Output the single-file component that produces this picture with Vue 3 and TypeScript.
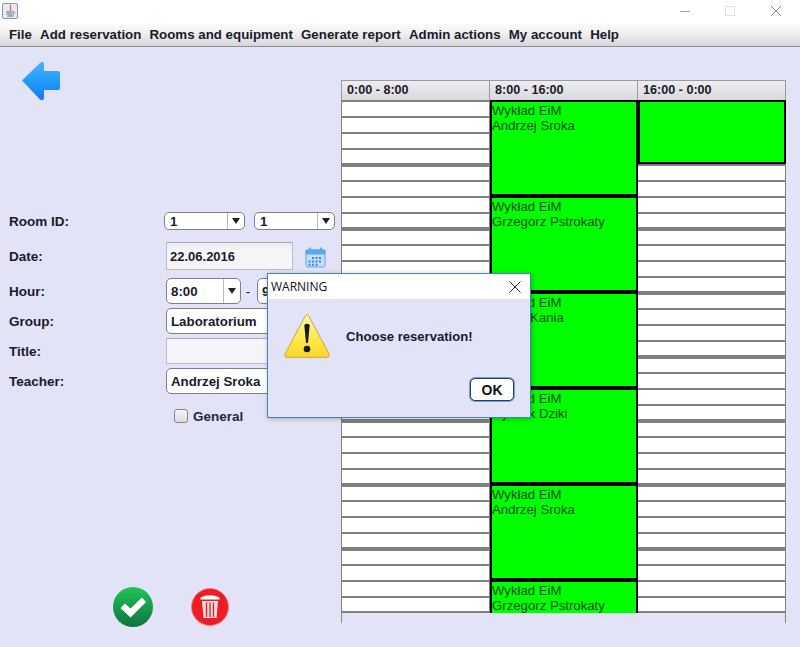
<script setup lang="ts">
const menus: string[] = ['File', 'Add reservation', 'Rooms and equipment', 'Generate report', 'Admin actions', 'My account', 'Help']
const rows = (n: number): number[] => Array.from({ length: n }, (_, i) => i)

interface Block { kind: 'free' | 'busy'; slots: number; lines?: string[] }

const free = (slots: number): Block => ({ kind: 'free', slots })
const eim = (who: string): Block => ({ kind: 'busy', slots: 6, lines: ['Wykład EiM', who] })

const columns: { title: string; blocks: Block[] }[] = [
  { title: '0:00 - 8:00', blocks: [free(33)] },
  {
    title: '8:00 - 16:00',
    blocks: [
      eim('Andrzej Sroka'),
      eim('Grzegorz Pstrokaty'),
      eim('Adam Kania'),
      eim('Ryszek Dziki'),
      eim('Andrzej Sroka'),
      eim('Grzegorz Pstrokaty'),
    ],
  },
  { title: '16:00 - 0:00', blocks: [{ kind: 'busy', slots: 4 }, free(29)] },
]
</script>

<template>
  <div class="window">
    <header class="titlebar">
      <svg class="java" width="16" height="16" viewBox="0 0 16 16">
        <rect x="0.5" y="0.5" width="15" height="15" rx="1.5" fill="#e6e9f0" stroke="#8595ab" />
        <path d="M9 2C7 4 10 5 8 8" fill="none" stroke="#d8702a" stroke-width="1.3" />
        <path d="M4 9h6.500M4.500 11h5.500M5.500 13h6" stroke="#56728f" stroke-width="1" />
        <path d="M10.500 8.500c2.500 0 2.500 2.500 0 3" fill="none" stroke="#56728f" />
      </svg>
      <div class="winctl">
        <svg width="121" height="24" viewBox="0 0 121 24">
          <path d="M1 11.500h10" stroke="#a0a0a0" />
          <rect x="46.500" y="6.500" width="9" height="9" fill="none" stroke="#e0e0e0" />
          <path d="M92 6l10 10M102 6l-10 10" stroke="#8a8a8a" />
        </svg>
      </div>
    </header>

    <nav class="menubar">
      <span v-for="m in menus" :key="m" class="menu">{{ m }}</span>
    </nav>

    <main class="content">
      <section class="left">
        <button class="iconbtn back" aria-label="Back">
          <svg width="40" height="42" viewBox="0 0 40 42">
            <defs>
              <linearGradient id="bk" x1="0" y1="0" x2="0" y2="1">
                <stop offset="0" stop-color="#4fb2f5" />
                <stop offset="0.5" stop-color="#1f9dfb" />
                <stop offset="1" stop-color="#1c72f2" />
              </linearGradient>
            </defs>
            <path d="M1 20.500 19.500 2.500Q22.500 0.500 23 4V11H37Q39 11 39 13V28Q39 30 37 30H23V38Q22 41.500 19 39.500Z" fill="url(#bk)" />
          </svg>
        </button>

        <form class="form" @submit.prevent>
          <div class="row r-room">
            <label>Room ID:</label>
            <div class="combo small"><span>1</span><i class="arrow"></i></div>
            <div class="combo small second"><span>1</span><i class="arrow"></i></div>
          </div>
          <div class="row r-date">
            <label>Date:</label>
            <div class="field date">22.06.2016</div>
            <svg class="cal" width="21" height="21" viewBox="0 0 21 21">
              <rect x="1" y="3" width="19" height="17" rx="1.500" fill="#c4dff8" stroke="#5ea6ea" />
              <rect x="0.500" y="2.500" width="20" height="5" rx="1.500" fill="#5ea6ea" />
              <path d="M5 0.500v4M16 0.500v4" stroke="#5ea6ea" stroke-width="2" />
              <path d="M7 10h2v2H7zM10.500 10h2v2h-2zM14 10h2v2h-2zM3.500 13.500h2v2h-2zM7 13.500h2v2H7zM10.500 13.500h2v2h-2zM14 13.500h2v2h-2zM3.500 16.700h2v2h-2zM7 16.700h2v2H7zM10.500 16.700h2v2h-2z" fill="#3f88d8" />
            </svg>
          </div>
          <div class="row r-hour">
            <label>Hour:</label>
            <div class="combo big time"><span>8:00</span><i class="arrow"></i></div>
            <span class="dash">-</span>
            <div class="combo big time"><span>9:00</span><i class="arrow"></i></div>
          </div>
          <div class="row r-next">
            <label>Group:</label>
            <div class="combo big wide"><span>Laboratorium</span></div>
          </div>
          <div class="row r-next">
            <label>Title:</label>
            <div class="field wide"></div>
          </div>
          <div class="row r-next">
            <label>Teacher:</label>
            <div class="combo big wide"><span>Andrzej Sroka</span></div>
          </div>
          <div class="row r-general">
            <span class="check"></span>
            <span class="general">General</span>
          </div>
        </form>

        <div class="actions">
          <button class="iconbtn" aria-label="Confirm">
            <svg width="40" height="40" viewBox="0 0 40 40">
              <defs>
                <linearGradient id="ok" x1="0" y1="0" x2="0" y2="1">
                  <stop offset="0" stop-color="#20c455" />
                  <stop offset="1" stop-color="#0e7440" />
                </linearGradient>
              </defs>
              <circle cx="20" cy="20" r="20" fill="url(#ok)" />
              <path d="M7.500 21 12 16.500 17.500 21.500 29 10.500 33 15 17.500 30.500Z" fill="#fff" />
            </svg>
          </button>
          <button class="iconbtn" aria-label="Delete">
            <svg width="38" height="38" viewBox="0 0 38 38">
              <circle cx="19" cy="19" r="18.500" fill="#ee1c25" stroke="#f47a80" />
              <path d="M9.500 9.500Q19 5 28.500 9.500V11.500H9.500Z" fill="#fff" />
              <path d="M11 13H27L25.500 30H12.500Z" fill="#fde4e4" />
              <path d="M15.500 14.500V29M19 14.500V29M22.500 14.500V29" stroke="#ee1c25" stroke-width="1.400" />
            </svg>
          </button>
        </div>
      </section>

      <section class="schedule">
        <div v-for="c in columns" :key="c.title" class="col">
          <div class="colhead">{{ c.title }}</div>
          <div class="colbody">
            <template v-for="(b, bi) in c.blocks" :key="bi">
              <div v-if="b.kind === 'busy'" class="busy" :style="{ height: b.slots * 16 + 'px' }">
                <div v-for="l in b.lines" :key="l">{{ l }}</div>
              </div>
              <template v-else>
                <div v-for="i in rows(b.slots)" :key="i" class="slot" :class="{ thick: i > 0 && i % 4 === 0 }"></div>
              </template>
            </template>
          </div>
          <div class="tail"></div>
        </div>
      </section>
    </main>

    <div class="dialog" role="dialog">
      <div class="dlgtitle">
        <span>WARNING</span>
        <svg width="12" height="12" viewBox="0 0 12 12"><path d="M0.500 0.500l11 11M11.500 0.500l-11 11" stroke="#222" /></svg>
      </div>
      <div class="dlgbody">
        <svg width="46" height="44" viewBox="0 0 46 44">
          <defs>
            <linearGradient id="tri" x1="0" y1="0" x2="0" y2="1">
              <stop offset="0" stop-color="#fff9b0" />
              <stop offset="0.6" stop-color="#ffe748" />
              <stop offset="1" stop-color="#fcd62a" />
            </linearGradient>
          </defs>
          <path d="M23 0.800Q24 0.800 25 2.500L45 40Q46 43 43 43.300H3Q0 43 1 40L21 2.500Q22 0.800 23 0.800Z" fill="url(#tri)" stroke="#c6a732" />
          <path d="M20.300 11Q23 8.500 25.700 11L24 29H22Z" fill="#1a1a1a" />
          <circle cx="23" cy="35" r="3.300" fill="#1a1a1a" />
        </svg>
        <p>Choose reservation!</p>
      </div>
      <div class="dlgfoot"><button class="okbtn">OK</button></div>
    </div>
  </div>
</template>

<style>
html, body { margin: 0; background: #e3e3f7; }
</style>

<style scoped>
.window {
  position: relative;
  width: 800px;
  height: 647px;
  display: flex;
  flex-direction: column;
  overflow: hidden;
  background: #e3e3f7;
  font-family: "Liberation Sans", Arial, sans-serif;
  color: #1a1a2a;
}
.titlebar {
  height: 24px;
  background: #fff;
  display: flex;
  align-items: flex-start;
  justify-content: space-between;
  padding: 3px 0 0 2px;
  box-sizing: border-box;
  flex: none;
}
.winctl { margin-top: -3px; height: 24px; }
.menubar {
  height: 23px;
  flex: none;
  box-sizing: border-box;
  padding: 0 0 2px 9px;
  display: flex;
  gap: 8.200px;
  align-items: center;
  background: linear-gradient(#fbfbfb, #f1f1f1 40%, #d5d5d9);
  border-bottom: 1px solid #8f8f98;
  font-weight: bold;
  font-size: 13.300px;
}
.content { flex: 1; display: flex; min-height: 0; }
.left {
  width: 341px;
  flex: none;
  display: flex;
  flex-direction: column;
  box-sizing: border-box;
  position: relative;
}
.iconbtn { padding: 0; border: 0; background: none; display: block; line-height: 0; }
.back { margin: 13px 0 0 21px; align-self: flex-start; }
.form { margin-top: 109px; padding-left: 9px; display: flex; flex-direction: column; }
.row { display: flex; align-items: center; font-size: 13.300px; font-weight: bold; }
.row label { width: 155px; flex: none; font-size: 13.500px; }
.r-room { height: 20px; }
.r-date { height: 28px; margin-top: 11px; }
.r-hour { height: 26px; margin-top: 8px; }
.r-next { height: 26px; margin-top: 4px; }
.r-general { height: 20px; margin-top: 12px; padding-left: 165px; }
.combo {
  box-sizing: border-box;
  background: #fff;
  display: flex;
  align-items: center;
  border: 1px solid #7c8089;
  border-radius: 5px;
  flex: none;
  position: relative;
}
.combo span { flex: 1; }
.small { width: 81px; height: 18px; padding-left: 5px; }
.second { margin-left: 9px; }
.big { height: 26px; margin-left: 2px; padding-left: 4px; }
.time { width: 75px; }
.wide { width: 169px; }
.arrow {
  width: 16px;
  align-self: stretch;
  flex: none;
  border-left: 1px solid #b4b8c0;
  position: relative;
}
.arrow::after {
  content: "";
  position: absolute;
  left: 4px;
  top: 50%;
  margin-top: -3px;
  border-left: 4px solid transparent;
  border-right: 4px solid transparent;
  border-top: 6px solid #222;
}
.field {
  box-sizing: border-box;
  margin-left: 2px;
  height: 27px;
  background: #f5f5f9;
  border: 1px solid #bcbcc4;
  border-top-color: #a8a8b0;
  padding-left: 3px;
  display: flex;
  align-items: center;
  flex: none;
}
.date { width: 127px; height: 28px; font-size: 13px; background: linear-gradient(#ebebee, #f6f6f8 30%); }
.field.wide { width: 169px; height: 26px; }
.cal { margin-left: 12px; margin-top: 3px; }
.dash { width: 14px; text-align: center; font-weight: normal; }
.check {
  width: 12px;
  height: 12px;
  border: 1px solid #84848c;
  border-radius: 3px;
  background: linear-gradient(#f5f5f5, #dcdce0);
  margin-right: 5px;
}
.general { color: #26263a; font-size: 13.500px; }
.actions {
  margin-top: auto;
  margin-bottom: 20px;
  display: flex;
  align-items: center;
  gap: 38px;
  padding-left: 113px;
}
.schedule {
  margin-top: 33px;
  width: 445px;
  height: 543px;
  display: flex;
  flex: none;
}
.col { width: 148px; flex: none; display: flex; flex-direction: column; box-sizing: border-box; }
.col:first-child { width: 149px; }
.colhead {
  height: 20px;
  box-sizing: border-box;
  flex: none;
  border-top: 1px solid #9a9aa4;
  border-right: 1px solid #9a9aa4;
  background: linear-gradient(#eeeef0, #d9d9de);
  font-size: 12.600px;
  font-weight: bold;
  line-height: 18px;
  padding-left: 5px;
}
.col:first-child .colhead { border-left: 1px solid #9a9aa4; }
.colbody { height: 513px; overflow: hidden; flex: none; }
.tail { flex: 1; }
.col:first-child .tail { border-left: 1px solid #8a8a8a; }
.col:last-child .tail { border-right: 1px solid #8a8a8a; }
.slot {
  height: 16px;
  box-sizing: border-box;
  background: #fff;
  border-top: 2px solid #808080;
  border-right: 1px solid #808080;
}
.col:first-child .slot { border-left: 1px solid #808080; }
.slot.thick { border-top-width: 3px; box-shadow: 0 -1px 0 #808080; }
.busy {
  box-sizing: border-box;
  background: #00ff00;
  border: 2px solid #050505;
  padding-top: 1px;
  font-size: 13.200px;
  line-height: 15px;
  color: #0c4a0c;
  overflow: hidden;
}
.dialog {
  position: absolute;
  left: 267px;
  top: 273px;
  width: 264px;
  height: 145px;
  box-sizing: border-box;
  border: 1px solid #3f83b8;
  background: #e3e3f7;
  display: flex;
  flex-direction: column;
  box-shadow: 1px 1px 5px rgba(0, 0, 0, 0.25);
}
.dlgtitle {
  height: 25px;
  background: #fff;
  flex: none;
  display: flex;
  align-items: center;
  justify-content: space-between;
  padding: 0 9px 0 3px;
  font-family: "Open Sans", sans-serif;
  font-size: 12px;
  color: #111;
}
.dlgbody { display: flex; align-items: center; padding: 15px 0 0 16px; }
.dlgbody p { margin: 0 0 0 16px; font-weight: bold; font-size: 13.100px; }
.dlgfoot { margin-top: auto; display: flex; justify-content: flex-end; padding: 0 16px 16px 0; }
.okbtn {
  width: 44px;
  height: 23px;
  padding: 0;
  background: #fff;
  border: 1px solid #2a3a55;
  border-radius: 5px;
  box-shadow: 0 0 0 1px #6fa5d3;
  font: bold 14px "Liberation Sans", Arial, sans-serif;
  color: #111;
}
</style>
